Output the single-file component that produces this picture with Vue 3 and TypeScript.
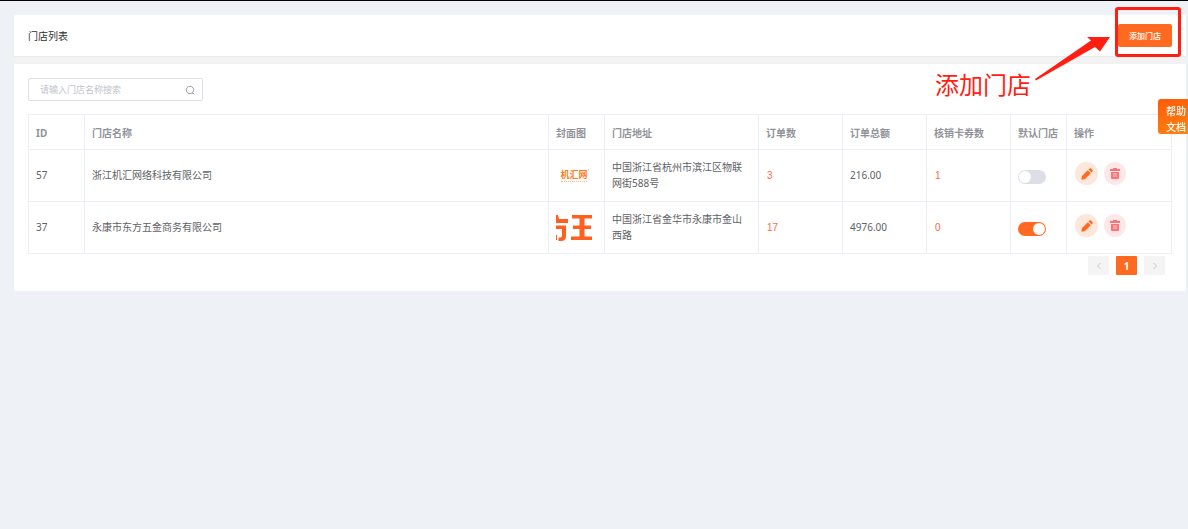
<script setup lang="ts">
import { ref } from 'vue'

interface Store {
  id: number
  name: string
  cover: 'wordmark' | 'glyph'
  address: string
  orders: number
  total: string
  coupons: number
  isDefault: boolean
}

const keyword = ref('')
const stores = ref<Store[]>([
  { id: 57, name: '浙江机汇网络科技有限公司', cover: 'wordmark', address: '中国浙江省杭州市滨江区物联网街588号', orders: 3, total: '216.00', coupons: 1, isDefault: false },
  { id: 37, name: '永康市东方五金商务有限公司', cover: 'glyph', address: '中国浙江省金华市永康市金山西路', orders: 17, total: '4976.00', coupons: 0, isDefault: true },
])
</script>

<template>
  <div class="page">
    <header class="head">
      <h1>门店列表</h1>
      <div class="add-wrap">
        <button class="add" type="button">添加门店</button>
        <span class="frame"></span>
        <svg class="arrow" viewBox="0 0 78 46" aria-hidden="true">
          <path d="M1 44 L57 5.500 L53 2 L76 2 L66 16.500 L61 12 L2 45.500 Z" />
        </svg>
        <span class="note">添加门店</span>
      </div>
    </header>

    <main class="panel">
      <label class="search">
        <input v-model="keyword" type="text" placeholder="请输入门店名称搜索" aria-label="请输入门店名称搜索" />
        <svg viewBox="0 0 10 10" aria-hidden="true">
          <path d="M4 8.500 A3.700 3.700 0 1 1 6 8.500 M3.500 8.500 H6 M7.500 7.500 V8.500 H9" />
        </svg>
      </label>

      <table>
        <colgroup>
          <col class="w-s" /><col /><col class="w-s" /><col class="w-l" /><col class="w-m" /><col class="w-m" /><col class="w-m" /><col class="w-s" /><col class="w-a" />
        </colgroup>
        <thead>
          <tr>
            <th>ID</th><th>门店名称</th><th>封面图</th><th>门店地址</th><th>订单数</th><th>订单总额</th><th>核销卡券数</th><th>默认门店</th><th>操作</th>
          </tr>
        </thead>
        <tbody>
          <tr v-for="s in stores" :key="s.id">
            <td class="txt">{{ s.id }}</td>
            <td class="txt">{{ s.name }}</td>
            <td>
              <div v-if="s.cover === 'wordmark'" class="wordmark"><b>机汇网</b><i></i></div>
              <svg v-else class="glyph" viewBox="0 0 36 28" aria-hidden="true">
                <path d="M0 1 H2 L3 5 H12 V9 H0 Z M0 11.500 H10 V22 Q10 27 5 27 H2.500 V23.500 H4.500 Q6 23.500 6 21.500 V15 H0 Z M0 21 H1 V26 H0 Z M16 1 H36 V4.500 H28.500 V11.500 H35 V15 H28.500 V22.500 H36 V26 H15 V22.500 H23.500 V15 H17 V11.500 H23.500 V4.500 H16 Z" />
              </svg>
            </td>
            <td class="txt">{{ s.address }}</td>
            <td><a class="num" href="#">{{ s.orders }}</a></td>
            <td class="txt">{{ s.total }}</td>
            <td><a class="num" href="#">{{ s.coupons }}</a></td>
            <td><input v-model="s.isDefault" class="switch" type="checkbox" role="switch" :aria-label="'默认门店 ' + s.name" /></td>
            <td>
              <div class="acts">
                <button class="act edit" type="button" aria-label="编辑">
                  <svg viewBox="0 0 12 12"><path d="M0.300 11.700 L1 8 L6.800 2.200 L9.800 5.200 L4 11 Z M7.500 1.500 L8.600 0.500 Q9.400 0 10.100 0.600 L11.400 1.900 Q12 2.600 11.500 3.400 L10.500 4.500 Z" /></svg>
                </button>
                <button class="act del" type="button" aria-label="删除">
                  <svg viewBox="0 0 12 12">
                    <path fill-rule="evenodd" d="M4 0 H8 V1 H11 V3 H1 V1 H4 Z M2 4 H10 V10 Q10 11 9 11 H3 Q2 11 2 10 Z M4 5 V9 H8 V5 Z" />
                    <path opacity="0.600" d="M4 5 H8 V9 H4 Z" />
                  </svg>
                </button>
              </div>
            </td>
          </tr>
        </tbody>
      </table>

      <nav class="pager" aria-label="分页">
        <button type="button" aria-label="上一页" disabled><svg viewBox="0 0 8 8"><path d="M5.500 1 L2.500 4 L5.500 7" /></svg></button>
        <button type="button" class="on">1</button>
        <button type="button" aria-label="下一页" disabled><svg viewBox="0 0 8 8"><path d="M2.500 1 L5.500 4 L2.500 7" /></svg></button>
      </nav>
    </main>

    <a class="help" href="#">帮助<br />文档</a>
  </div>
</template>

<style>
body {
  background: #eef1f6;
}
</style>

<style scoped>
.page {
  min-height: 100vh;
  box-sizing: border-box;
  padding: 14px 2px 0 14px;
  border-top: 1px solid #000;
  background: #eef1f6;
  color: #606266;
  font: 10px/16px "Noto Sans", "Noto Sans CJK SC", sans-serif;
}
button,
input {
  font: inherit;
  margin: 0;
  padding: 0;
  border: 0;
}
button {
  cursor: pointer;
}
.head {
  display: flex;
  align-items: center;
  justify-content: space-between;
  height: 41px;
  padding: 0 14px;
  border-bottom: 1px solid #e8eaf0;
  border-radius: 2px 2px 0 0;
  background: #fff;
}
h1 {
  margin: 0;
  color: #303133;
  font-size: 10px;
  font-weight: 400;
}
.add-wrap {
  position: relative;
  display: flex;
}
.add {
  width: 54px;
  height: 23px;
  border-radius: 2px;
  background: #ff6a20;
  color: #fff;
  font-size: 8px;
  font-weight: 500;
}
.frame {
  position: absolute;
  top: -17px;
  right: -9px;
  width: 60px;
  height: 44px;
  border: 3px solid #ff1e12;
  border-radius: 3px;
  pointer-events: none;
}
.arrow {
  position: absolute;
  top: 11px;
  right: 60px;
  width: 78px;
  height: 46px;
  fill: #ff1e12;
}
.note {
  position: absolute;
  top: 45px;
  right: 141px;
  color: #ff1e12;
  font-size: 24px;
  line-height: 32px;
  white-space: nowrap;
}
.panel {
  padding: 14px 14px 16px;
  border-top: 7px solid #f2f2f2;
  border-radius: 0 0 2px 2px;
  background: #fff;
}
.search {
  display: flex;
  align-items: center;
  box-sizing: border-box;
  width: 175px;
  height: 23px;
  padding: 0 7px 0 11px;
  border: 1px solid #dcdfe6;
  border-radius: 2px;
}
.search input {
  flex: 1;
  min-width: 0;
  outline: 0;
  background: none;
  color: #606266;
  font-size: 9px;
}
.search input::placeholder {
  color: #c0c4cc;
}
.search svg {
  width: 10px;
  height: 10px;
  fill: none;
  stroke: #9a9ea6;
}
table {
  width: 100%;
  margin-top: 13px;
  border-collapse: collapse;
  table-layout: fixed;
}
.w-s { width: 56px; }
.w-m { width: 84px; }
.w-l { width: 154px; }
.w-a { width: 105px; }
th,
td {
  box-sizing: border-box;
  height: 52px;
  padding: 0 7px;
  border: 1px solid #ebeef5;
  text-align: left;
  vertical-align: middle;
}
th {
  height: 35px;
  padding-top: 2px;
  color: #909399;
  font-weight: 700;
  white-space: nowrap;
}
.txt {
  padding-bottom: 2px;
}
.num {
  padding-left: 1px;
  color: #ff6a40;
  font-family: "Liberation Sans", sans-serif;
  text-decoration: none;
}
.wordmark {
  position: relative;
  width: 36px;
  color: #ff7a1a;
  font-size: 9px;
  line-height: 10px;
  text-align: center;
}
.wordmark::after {
  content: "";
  position: absolute;
  top: -1px;
  right: 3px;
  width: 1px;
  height: 1px;
  background: #ffb37d;
}
.wordmark b {
  display: block;
  font-weight: 700;
}
.wordmark i {
  display: block;
  margin: 1px 5px 0;
  border-top: 1px dotted #ffb37d;
}
.glyph {
  display: block;
  width: 36px;
  height: 28px;
  fill: #ff6020;
}
.switch {
  display: block;
  appearance: none;
  box-sizing: border-box;
  width: 28px;
  height: 14px;
  margin-top: 3px;
  padding: 1px;
  border-radius: 7px;
  background: #dcdfe6;
}
.switch::before {
  content: "";
  display: block;
  width: 12px;
  height: 12px;
  border-radius: 50%;
  background: #fff;
}
.switch:checked {
  background: #ff6a20;
}
.switch:checked::before {
  margin-left: auto;
}
.acts {
  display: flex;
  gap: 6px;
  padding: 0 1px 4px;
}
.act {
  display: grid;
  place-items: center;
  width: 23px;
  height: 23px;
  border-radius: 50%;
}
.act svg {
  width: 12px;
  height: 12px;
  fill: currentColor;
}
.edit {
  background: #fce7da;
  color: #ff6a20;
}
.del {
  width: 22px;
  background: #fde7e9;
  color: #fb7478;
}
.pager {
  display: flex;
  justify-content: flex-end;
  gap: 7px;
  margin-top: 2px;
  padding-right: 7px;
}
.pager button {
  display: grid;
  place-items: center;
  width: 21px;
  height: 19px;
  border-radius: 1px;
  background: #f4f4f5;
}
.pager svg {
  width: 8px;
  height: 8px;
  fill: none;
  stroke: #c6cad4;
}
.pager .on {
  background: #ff6a20;
  color: #fff;
  font-weight: 700;
}
.help {
  position: fixed;
  top: 99px;
  right: 0;
  box-sizing: border-box;
  width: 30px;
  padding: 4px 0 0 8px;
  height: 35px;
  border-radius: 3px 0 0 3px;
  background: linear-gradient(160deg, #ff5a08, #ff8412);
  color: #fff;
  font-weight: 500;
  text-decoration: none;
}
</style>
